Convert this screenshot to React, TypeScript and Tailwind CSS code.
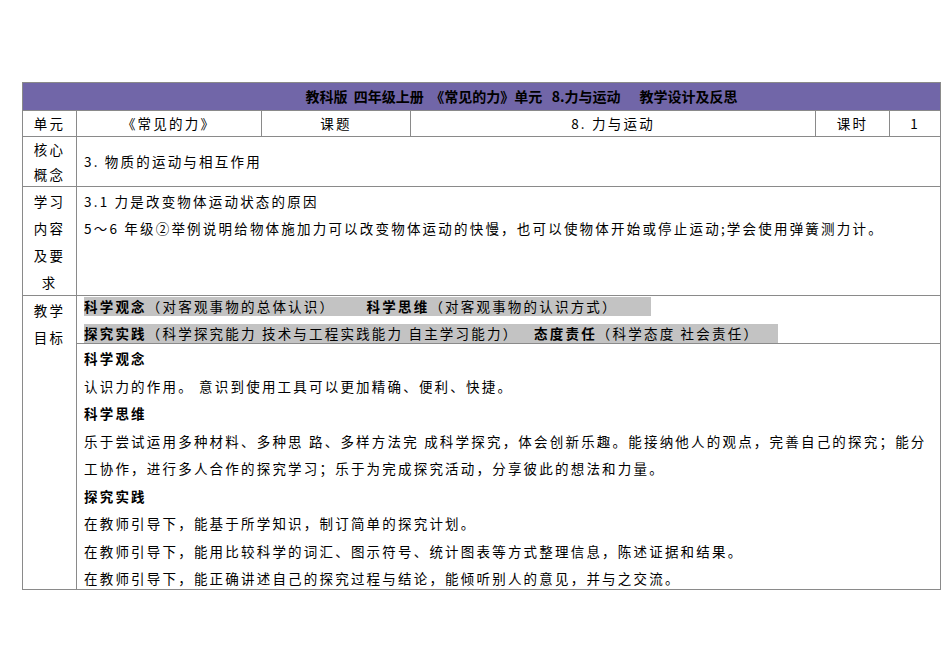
export default function App() {
  const f = { fontFamily: '"Noto Sans CJK SC", "Noto Sans", sans-serif' };
  const b = "border-[#8a8a8a]";
  return (
    <div className="w-[950px] h-[672px] bg-white pt-[82px] pl-[22px] text-black" style={f}>
      <div className={`w-[919px] border ${b} text-[13.5px] tracking-[2.2px]`}>
        <div className={`h-[28px] bg-[#7166a8] border-b ${b} flex items-center justify-center pl-[80px] font-bold text-[14px] tracking-normal whitespace-pre`}>
          {"教科版  四年级上册  《常见的力》单元   8.力与运动      教学设计及反思"}
        </div>
        <div className={`grid grid-cols-[54px_185px_149px_405px_74px_1fr] h-[26px] border-b ${b} items-stretch`}>
          <div className={`border-r ${b} flex items-center justify-center`}>单元</div>
          <div className={`border-r ${b} flex items-center justify-center`}>《常见的力》</div>
          <div className={`border-r ${b} flex items-center justify-center`}>课题</div>
          <div className={`border-r ${b} flex items-center justify-center`}>8. 力与运动</div>
          <div className={`border-r ${b} flex items-center justify-center`}>课时</div>
          <div className="flex items-center justify-center">1</div>
        </div>
        <div className={`flex h-[50px] border-b ${b}`}>
          <div className={`w-[54px] border-r ${b} flex flex-col items-center justify-center leading-[25px]`}><span>核心</span><span>概念</span></div>
          <div className="flex items-center pl-[7px]">3. 物质的运动与相互作用</div>
        </div>
        <div className={`flex h-[109px] border-b ${b}`}>
          <div className={`w-[54px] border-r ${b} flex flex-col items-center pt-[1px] leading-[27px]`}><span>学习</span><span>内容</span><span>及要</span><span>求</span></div>
          <div className="pl-[7px] pt-[1px] leading-[27px]">
            <div>3.1  力是改变物体运动状态的原因</div>
            <div>5～6 年级②举例说明给物体施加力可以改变物体运动的快慢，也可以使物体开始或停止运动;学会使用弹簧测力计。</div>
          </div>
        </div>
        <div className="flex h-[293px]">
          <div className={`w-[54px] border-r ${b} flex flex-col items-center pt-[1px] leading-[27px]`}><span>教学</span><span>目标</span></div>
          <div className="flex-1 flex flex-col">
            <div className={`h-[52px] border-b ${b} pl-[7px] pt-[1px] flex flex-col gap-[8px]`}>
              <div className="w-[567px] h-[19px] bg-[#c3c3c3] flex items-center whitespace-pre"><b>科学观念</b>（对客观事物的总体认识）      <b>科学思维</b>（对客观事物的认识方式）</div>
              <div className="w-[694px] h-[19px] bg-[#c3c3c3] flex items-center whitespace-pre"><b>探究实践</b>（科学探究能力 技术与工程实践能力 自主学习能力）   <b>态度责任</b>（科学态度 社会责任）</div>
            </div>
            <div className="pl-[7px] pr-[4px] leading-[27.5px] pt-[1px]">
              <div className="font-bold">科学观念</div>
              <div>认识力的作用。 意识到使用工具可以更加精确、便利、快捷。</div>
              <div className="font-bold">科学思维</div>
              <div>乐于尝试运用多种材料、多种思 路、多样方法完 成科学探究，体会创新乐趣。能接纳他人的观点，完善自己的探究；能分工协作，进行多人合作的探究学习；乐于为完成探究活动，分享彼此的想法和力量。</div>
              <div className="font-bold">探究实践</div>
              <div>在教师引导下，能基于所学知识，制订简单的探究计划。</div>
              <div>在教师引导下，能用比较科学的词汇、图示符号、统计图表等方式整理信息，陈述证据和结果。</div>
              <div>在教师引导下，能正确讲述自己的探究过程与结论，能倾听别人的意见，并与之交流。</div>
            </div>
          </div>
        </div>
      </div>
    </div>
  );
}
